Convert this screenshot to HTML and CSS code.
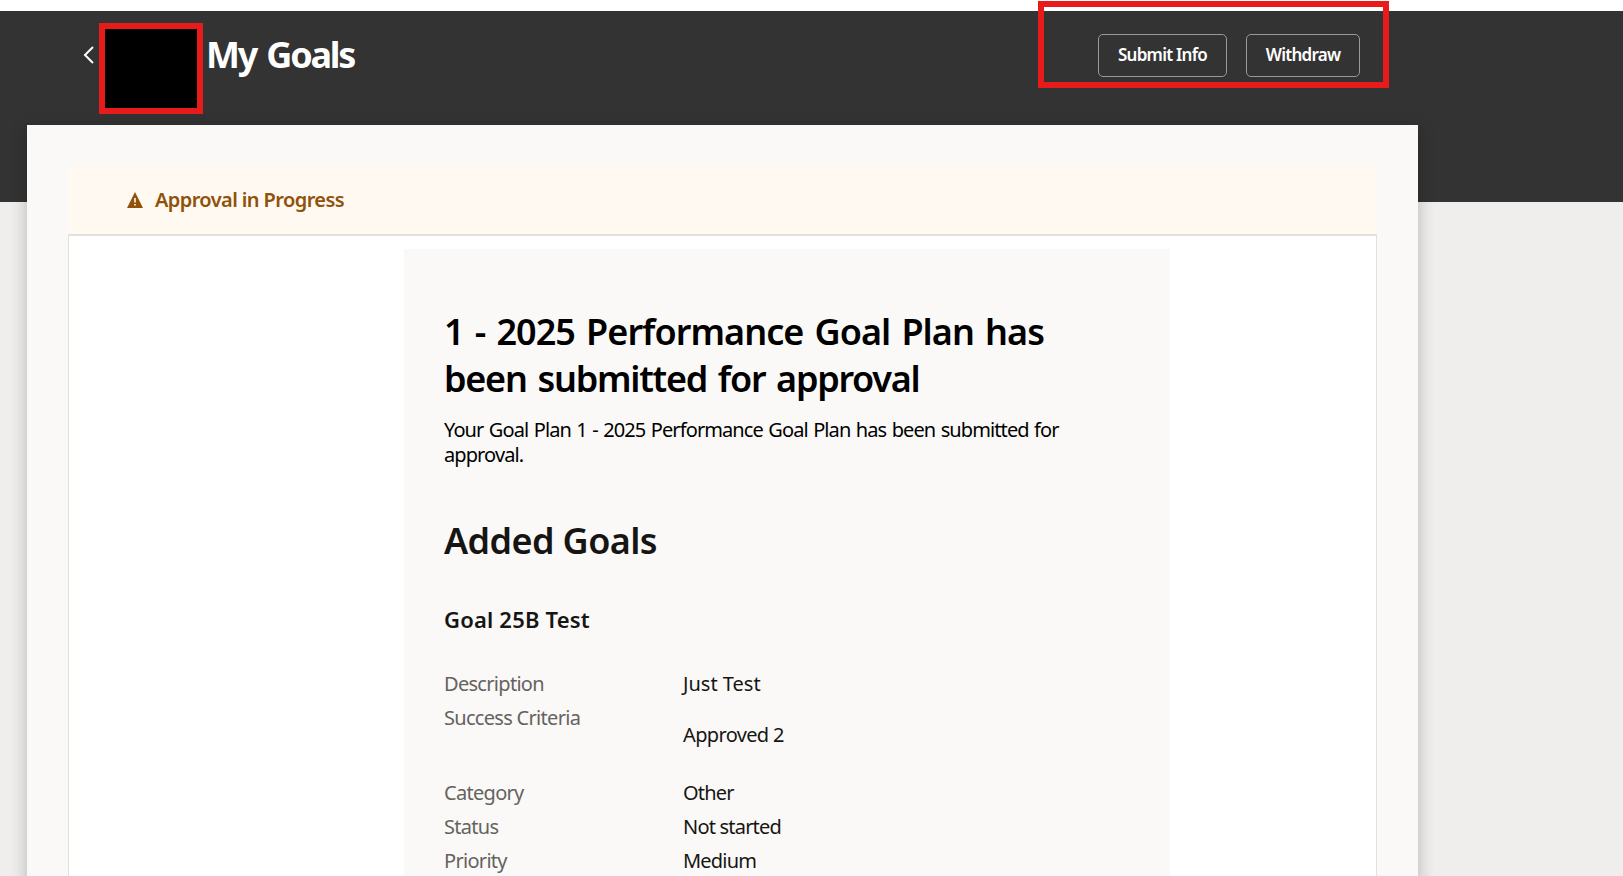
FILE: index.html
```html
<!DOCTYPE html>
<html lang="en">

<head>
    <meta charset="UTF-8" />
    <meta name="viewport" content="width=device-width, initial-scale=1.0" />
    <title>My Goals</title>
    <link rel="stylesheet" href="styles.css">
</head>

<body>

    <header class="page-header">
        <a class="back-link" href="#" aria-label="Back">
            <svg width="11" height="18" viewBox="0 0 11 18">
                <path d="M10 1 L2 9 L10 17" fill="none" stroke="#fff" stroke-width="2" />
            </svg>
        </a>
        <div class="avatar"></div>
        <h1 class="page-title">My Goals</h1>
        <div class="actions">
            <button class="btn btn-submit">Submit Info</button>
            <button class="btn btn-withdraw">Withdraw</button>
            <div class="highlight"></div>
        </div>
    </header>

    <main class="sheet">
        <div class="banner">
            <svg class="banner-icon" width="16" height="16" viewBox="0 0 16 16">
                <path d="M8 0 L16 16 H0 Z" fill="#8f520a" />
                <path d="M7.2 6 H8.8 V10.5 H7.2 Z M7.2 12 H8.8 V13.6 H7.2 Z" fill="#fff9f2" />
            </svg>
            <span class="banner-text">Approval in Progress</span>
        </div>
        <div class="content">
            <section class="plan">
                <h2 class="plan-title">1 - 2025 Performance Goal Plan has<br><span class="tight">been submitted for approval</span></h2>
                <p class="plan-text">Your Goal Plan 1 - 2025 Performance Goal Plan has been submitted for<br>approval.</p>
                <h2 class="section-title">Added Goals</h2>
                <h3 class="goal-title">Goal 25B Test</h3>
                <dl class="details">
                    <dt>Description</dt>
                    <dd class="loose">Just Test</dd>
                    <dt>Success Criteria</dt>
                    <dd class="rich">Approved 2</dd>
                    <dt>Category</dt>
                    <dd>Other</dd>
                    <dt>Status</dt>
                    <dd>Not started</dd>
                    <dt>Priority</dt>
                    <dd>Medium</dd>
                </dl>
            </section>
        </div>
    </main>

</body>

</html>
```
FILE: styles.css
```css
* {
    box-sizing: border-box;
}

body {
    margin: 0;
    padding-top: 11px;
    height: 876px;
    overflow: hidden;
    font-family: "Noto Sans", sans-serif;
    font-size: 20px;
    color: #161513;
    background: linear-gradient(#fff 11px, #333 11px, #333 202px, #efeeec 202px);
}

h1,
h2,
h3,
p,
dl,
dd {
    margin: 0;
}

.page-header {
    display: flex;
    align-items: flex-start;
    width: 1360px;
    height: 114px;
    padding-left: 83px;
    color: #fff;
}

.back-link {
    margin-top: 35px;
    height: 18px;
    line-height: 0;
}

.avatar {
    width: 104px;
    height: 91px;
    margin: 12px 3px 0 5px;
    background: #000;
    border: 6px solid #e81b1b;
}

.page-title {
    margin-top: 20px;
    font-size: 36px;
    line-height: 48px;
    font-weight: 700;
    letter-spacing: -2.2px;
    word-spacing: 3px;
}

.actions {
    position: relative;
    display: flex;
    gap: 19px;
    margin-left: auto;
    padding-top: 23px;
}

.btn {
    height: 43px;
    padding: 0 0 2px;
    font: 600 17px "Noto Sans", sans-serif;
    letter-spacing: -0.75px;
    color: #fff;
    background: none;
    border: 1px solid #999;
    border-radius: 5px;
}

.btn-submit {
    width: 129px;
}

.btn-withdraw {
    width: 114px;
}

.highlight {
    position: absolute;
    top: -10px;
    left: -60px;
    width: 351px;
    height: 87px;
    border: 6px solid #e81b1b;
}

.sheet {
    width: 1391px;
    height: 760px;
    margin-left: 27px;
    padding: 41px 41px 0;
    background: #faf9f7;
    box-shadow: 0 4px 16px rgba(0, 0, 0, 0.24);
}

.banner {
    display: flex;
    align-items: center;
    height: 68px;
    padding: 0 0 1px 59px;
    font-weight: 600;
    letter-spacing: -0.6px;
    color: #8f520a;
    background: #fff9f2;
}

.banner-icon {
    margin-right: 12px;
}

.content {
    height: 660px;
    padding: 13px 0 0 335px;
    background: #fff;
    border: 1px solid #e3e1dc;
    border-top-width: 2px;
}

.plan {
    width: 766px;
    height: 640px;
    padding: 59px 40px 0;
    background: #faf9f7;
}

.plan-title,
.section-title {
    font-size: 36px;
    line-height: 47px;
    font-weight: 600;
    letter-spacing: -0.6px;
}

.plan-title {
    color: #000;
    letter-spacing: -0.95px;
    word-spacing: 2.7px;
}

.plan-title .tight {
    letter-spacing: -1.25px;
}

.plan-text {
    margin-top: 15px;
    line-height: 25px;
    letter-spacing: -0.9px;
    word-spacing: 1.1px;
    color: #000;
    white-space: nowrap;
}

.section-title {
    margin-top: 50px;
}

.goal-title {
    margin-top: 40px;
    font-size: 22px;
    line-height: 30px;
    font-weight: 600;
    letter-spacing: 0.2px;
}

.details {
    display: grid;
    grid-template-columns: 239px 1fr;
    margin-top: 33px;
    line-height: 34px;
    letter-spacing: -0.7px;
}

.details dt {
    color: #65625f;
}

.details dd {
    letter-spacing: -0.8px;
}

.details .loose {
    letter-spacing: 0;
}

.details .rich {
    height: 75px;
    padding-top: 17px;
    letter-spacing: -0.65px;
}
```
